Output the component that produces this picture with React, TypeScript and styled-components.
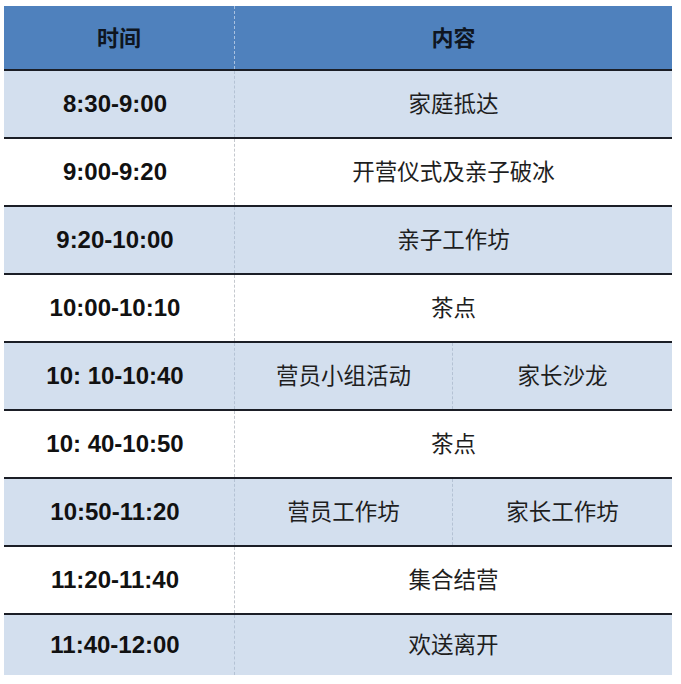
import React, { FC } from 'react';
import styled, { createGlobalStyle } from 'styled-components';

const GlobalStyle = createGlobalStyle`
    html, body {
        margin: 0;
        padding: 0;
        background: #ffffff;
    }
    body {
        font-family: "Liberation Sans", "Noto Sans CJK SC", sans-serif;
    }
`;

const Page = styled.div`
    padding: 6px 9px 0 4px;
`;

const Table = styled.div`
    width: 668px;
    display: flex;
    flex-direction: column;
`;

const Row = styled.div<{ $shade: 'head' | 'light' | 'white'; $height: number; $line: boolean }>`
    display: grid;
    grid-template-columns: 230px 218px 220px;
    height: ${p => p.$height}px;
    box-sizing: border-box;
    border-top: ${p => (p.$line ? '2px solid #1b1e26' : 'none')};
    background: ${p =>
        p.$shade === 'head' ? '#4f81bd' : p.$shade === 'light' ? '#d3dfee' : '#ffffff'};
`;

const Cell = styled.div<{ $span?: boolean; $divider?: string }>`
    display: flex;
    align-items: center;
    justify-content: center;
    grid-column: ${p => (p.$span ? 'span 2' : 'auto')};
    border-left: ${p => (p.$divider ? `1px dashed ${p.$divider}` : 'none')};
    color: #151515;
`;

const HeadText = styled.span`
    font-family: "Noto Sans CJK SC", sans-serif;
    font-weight: 700;
    font-size: 22px;
    line-height: 1;
    margin-bottom: 4px;
    color: #0e1520;
`;

const TimeText = styled.span`
    font-family: "Liberation Sans", Arial, sans-serif;
    font-weight: 700;
    font-size: 24px;
    line-height: 1;
    margin-right: 8px;
    color: #111111;
    white-space: pre;
`;

const ContentText = styled.span`
    font-family: "Noto Sans CJK SC", sans-serif;
    font-weight: 400;
    font-size: 22.5px;
    line-height: 1;
    margin-bottom: 3px;
    color: #1e1e1e;
`;

interface Item {
    time: string;
    content: string[];
}

const items: Item[] = [
    { time: '8:30-9:00', content: ['家庭抵达'] },
    { time: '9:00-9:20', content: ['开营仪式及亲子破冰'] },
    { time: '9:20-10:00', content: ['亲子工作坊'] },
    { time: '10:00-10:10', content: ['茶点'] },
    { time: '10: 10-10:40', content: ['营员小组活动', '家长沙龙'] },
    { time: '10: 40-10:50', content: ['茶点'] },
    { time: '10:50-11:20', content: ['营员工作坊', '家长工作坊'] },
    { time: '11:20-11:40', content: ['集合结营'] },
    { time: '11:40-12:00', content: ['欢送离开'] },
];

const App: FC = () => {
    return (
        <>
            <GlobalStyle />
            <Page>
                <Table>
                    <Row $shade="head" $height={63} $line={false}>
                        <Cell>
                            <HeadText>时间</HeadText>
                        </Cell>
                        <Cell $span $divider="#a9c1e0">
                            <HeadText>内容</HeadText>
                        </Cell>
                    </Row>
                    {items.map((item, i) => {
                        const shade = i % 2 === 0 ? 'light' : 'white';
                        const last = i === items.length - 1;
                        const divider = shade === 'light' ? '#b4c2d4' : '#c4c8ce';
                        return (
                            <Row key={item.time} $shade={shade} $height={last ? 62 : 68} $line>
                                <Cell>
                                    <TimeText>{item.time}</TimeText>
                                </Cell>
                                {item.content.length === 1 ? (
                                    <Cell $span $divider={divider}>
                                        <ContentText>{item.content[0]}</ContentText>
                                    </Cell>
                                ) : (
                                    item.content.map(c => (
                                        <Cell key={c} $divider={divider}>
                                            <ContentText>{c}</ContentText>
                                        </Cell>
                                    ))
                                )}
                            </Row>
                        );
                    })}
                </Table>
            </Page>
        </>
    );
};

export default App;
